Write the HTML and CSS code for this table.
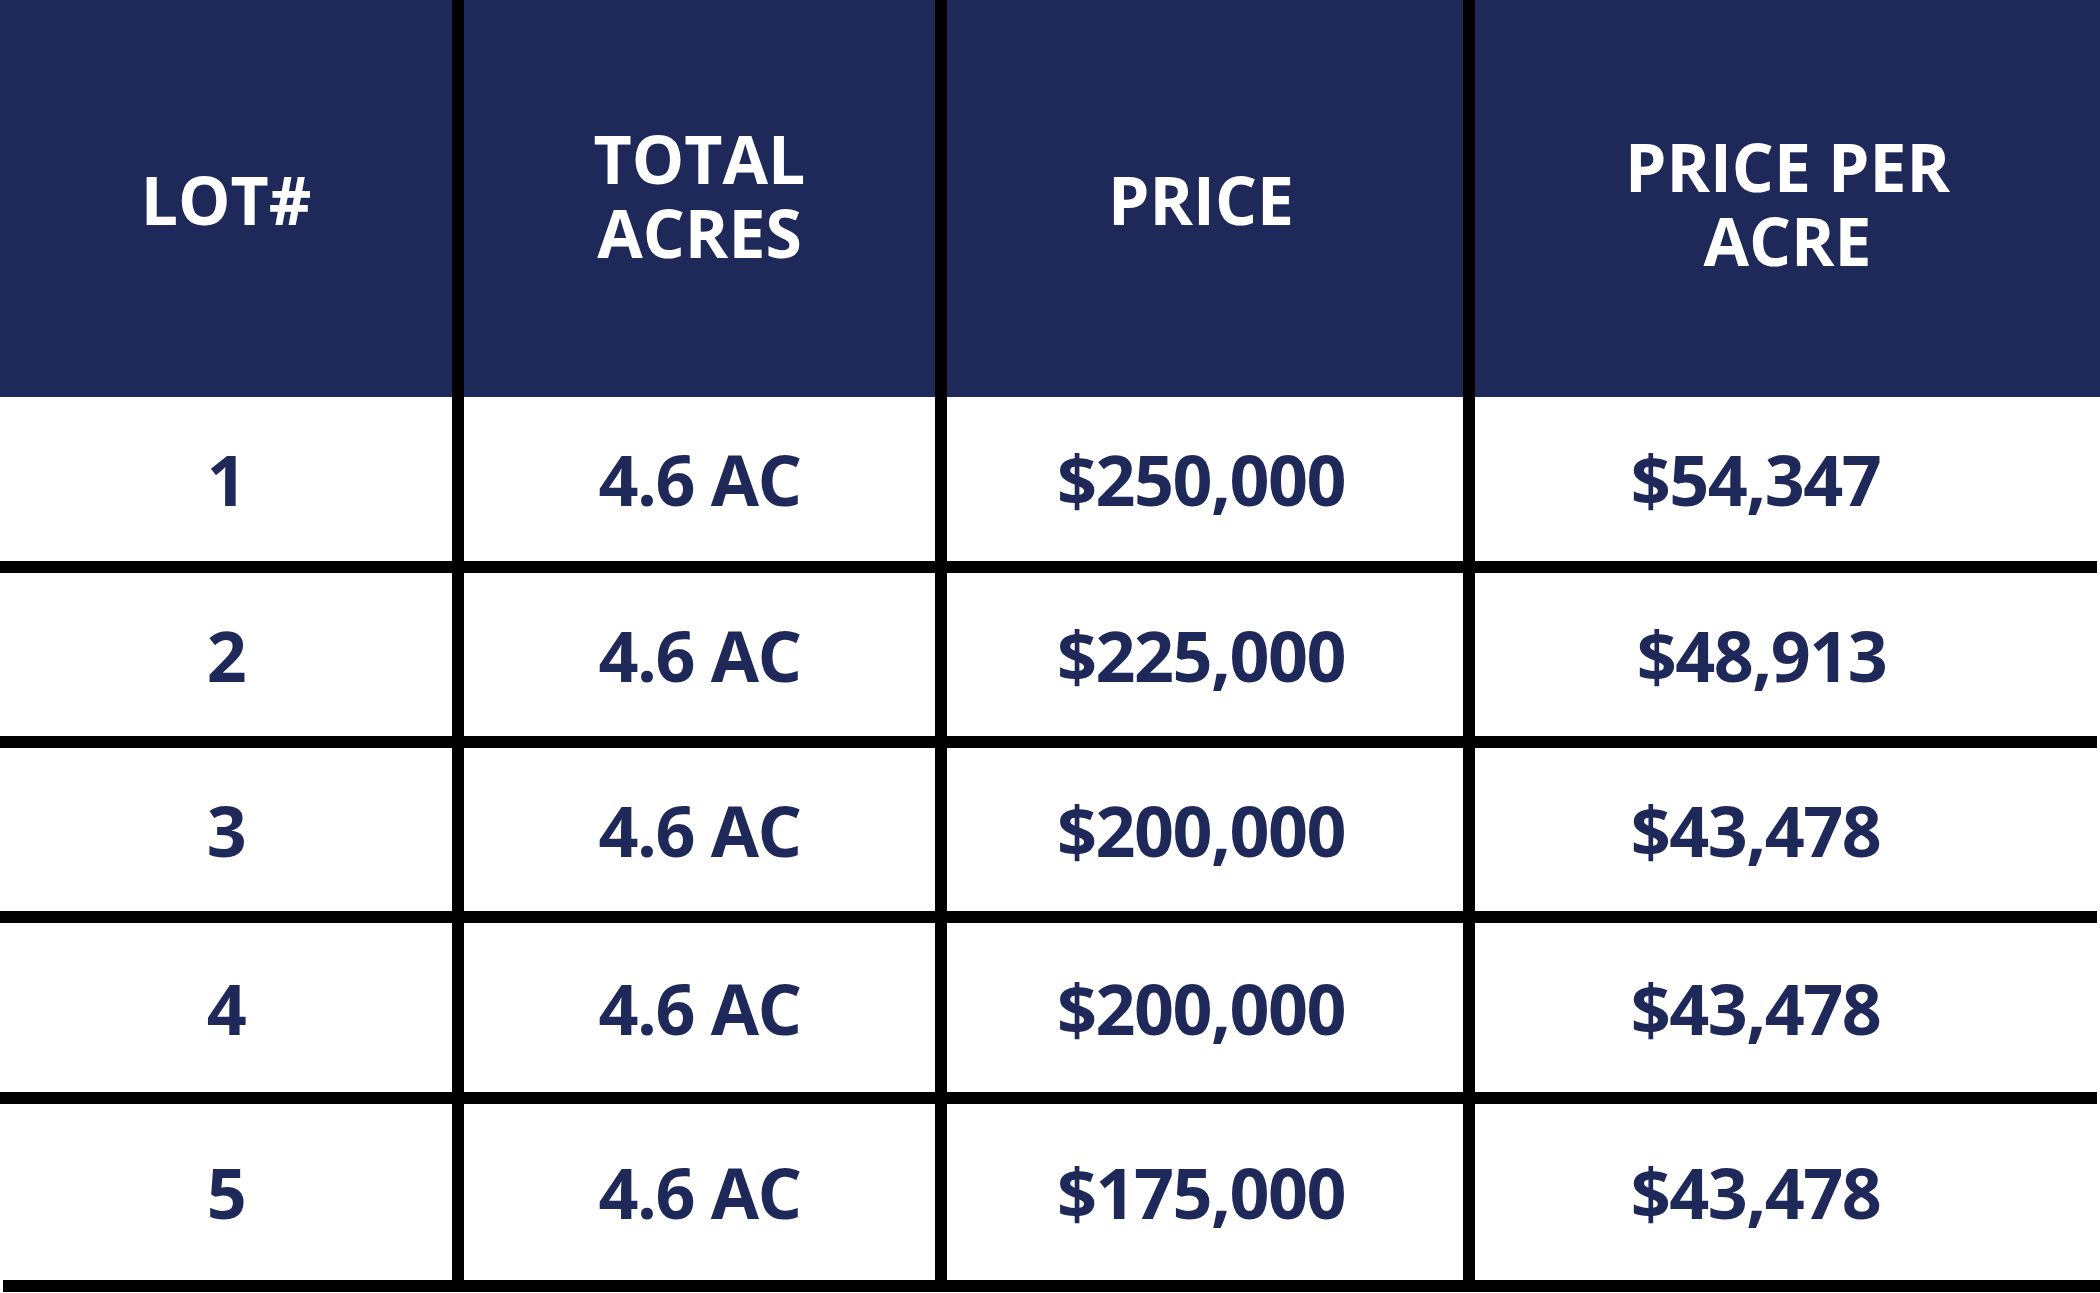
FILE: index.html
```html
<!DOCTYPE html>
<html lang="en">
<head>
<meta charset="utf-8">
<title>Lot Pricing</title>
<link rel="stylesheet" href="styles.css">
</head>
<body>
<div class="table">
  <div class="row head">
    <div class="cell"><span>LOT#</span></div>
    <div class="cell cell-two"><span>TOTAL<br>ACRES</span></div>
    <div class="cell cell-price"><span>PRICE</span></div>
    <div class="cell cell-last"><span>PRICE PER<br>ACRE</span></div>
  </div>
  <div class="row body r1">
    <div class="cell">1</div>
    <div class="cell">4.6 AC</div>
    <div class="cell cell-amt">$250,000</div>
    <div class="cell cell-ppa">$54,347</div>
  </div>
  <div class="rule"></div>
  <div class="row body r2">
    <div class="cell">2</div>
    <div class="cell">4.6 AC</div>
    <div class="cell cell-amt">$225,000</div>
    <div class="cell cell-ppa cell-shift">$48,913</div>
  </div>
  <div class="rule"></div>
  <div class="row body r3">
    <div class="cell">3</div>
    <div class="cell">4.6 AC</div>
    <div class="cell cell-amt">$200,000</div>
    <div class="cell cell-ppa">$43,478</div>
  </div>
  <div class="rule"></div>
  <div class="row body r4">
    <div class="cell">4</div>
    <div class="cell">4.6 AC</div>
    <div class="cell cell-amt">$200,000</div>
    <div class="cell cell-ppa">$43,478</div>
  </div>
  <div class="rule"></div>
  <div class="row body r5">
    <div class="cell">5</div>
    <div class="cell">4.6 AC</div>
    <div class="cell cell-amt">$175,000</div>
    <div class="cell cell-ppa">$43,478</div>
  </div>
  <div class="rule rule-bottom"></div>
</div>
</body>
</html>
```
FILE: styles.css
```css
html, body {
  margin: 0;
  padding: 0;
  background: #ffffff;
}

.table {
  width: 2100px;
  display: flex;
  flex-direction: column;
  font-family: "Open Sans", "Liberation Sans", sans-serif;
  font-weight: 700;
}

.row {
  display: grid;
  grid-template-columns: 452px 471px 516px 1fr;
  column-gap: 12px;
  background: #000000;
}

.cell {
  display: flex;
  align-items: center;
  justify-content: center;
  text-align: center;
}

.head {
  height: 397px;
}

.head .cell {
  background: #1f2959;
  color: #ffffff;
  font-size: 66px;
  line-height: 74px;
}

.head .cell-two {
  padding-bottom: 8px;
}

.head .cell-price {
  padding-right: 8px;
}

.head .cell-last {
  padding-top: 8px;
}

.body .cell {
  background: #ffffff;
  color: #1f2959;
  font-size: 70px;
  line-height: 1;
  letter-spacing: -1.5px;
}

.body .cell-amt {
  padding-right: 8px;
}

.body .cell-ppa {
  padding-right: 64px;
}

.body .cell-shift {
  padding-left: 12px;
}

.r1 { height: 164px; }
.r2 { height: 163px; }
.r3 { height: 163px; }
.r4 { height: 169px; }
.r5 { height: 176px; }

.rule {
  height: 12px;
  background: #000000;
  margin-right: 3px;
}

.rule-bottom {
  margin-right: 0;
  margin-left: 3px;
}
```
